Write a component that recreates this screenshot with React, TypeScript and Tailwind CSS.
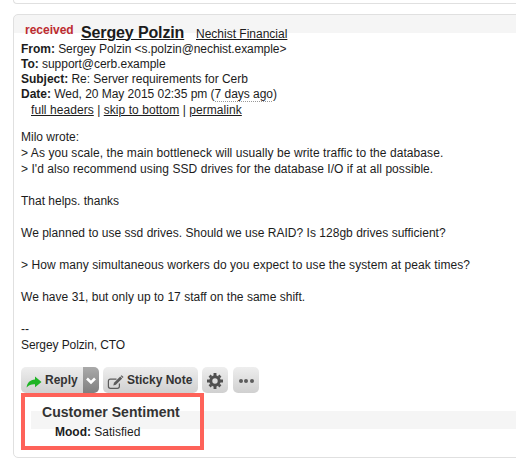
import type { ReactNode } from "react";

const BODY: { text: string; tracking?: string }[] = [
  { text: "Milo wrote:" },
  {
    text: "> As you scale, the main bottleneck will usually be write traffic to the database.",
    tracking: "tracking-[0.073px]",
  },
  {
    text: "> I'd also recommend using SSD drives for the database I/O if at all possible.",
    tracking: "tracking-[0.052px]",
  },
  { text: "" },
  { text: "That helps. thanks" },
  { text: "" },
  {
    text: "We planned to use ssd drives. Should we use RAID? Is 128gb drives sufficient?",
    tracking: "tracking-[0.02px]",
  },
  { text: "" },
  {
    text: "> How many simultaneous workers do you expect to use the system at peak times?",
    tracking: "tracking-[0.075px]",
  },
  { text: "" },
  { text: "We have 31, but only up to 17 staff on the same shift.", tracking: "tracking-[0.02px]" },
  { text: "" },
  { text: "--" },
  { text: "Sergey Polzin, CTO", tracking: "tracking-[-0.1px]" },
];

function Field({ label, children }: { label: string; children: ReactNode }) {
  return (
    <div className="h-[15px] leading-[15px] tracking-[-0.03px]">
      <b>{label}:</b> {children}
    </div>
  );
}

function HeaderLink({ children }: { children: ReactNode }) {
  return <a className="underline decoration-1 underline-offset-1">{children}</a>;
}

const BUTTON =
  "flex h-[26px] items-center bg-linear-to-b from-[#eeeeee] to-[#d0d0d0] font-bold text-[#333]";

function ReplyArrow() {
  return (
    <svg className="mt-[4px] h-[12px] w-[16px]" viewBox="0 0 16 12">
      <path d="M9 0.5 L15.5 6 L9 11.2 V8.2 C5.5 8 3 8.8 0.6 11.6 C1.2 7 4 3.8 9 3.6 Z" fill="#1fb425" />
    </svg>
  );
}

function EditIcon() {
  return (
    <svg className="mt-[4px] h-[14px] w-[17px]" viewBox="0 0 17 14" fill="none" stroke="#5c5c5c">
      <path d="M9.5 4.2 H3.4 Q1.4 4.2 1.4 6.2 V11.3 Q1.4 13.3 3.4 13.3 H10.4 Q12.4 13.3 12.4 11.3 V8.6" strokeWidth="1.2" />
      <path d="M6.3 10.4 L7 7.8 L13.2 1.5 L15.2 3.5 L8.9 9.8 Z" fill="#5c5c5c" stroke="none" />
      <path d="M13.7 1 L14.6 0.2 L16.5 2.1 L15.7 3 Z" fill="#5c5c5c" stroke="none" />
    </svg>
  );
}

function GearIcon() {
  return (
    <svg className="mt-[2px] h-[16px] w-[16px]" viewBox="-8 -8 16 16" fill="none" stroke="#505050">
      <circle r="4.2" strokeWidth="3" />
      <g strokeWidth="2.9">
        <path d="M0 -8 V-5 M0 5 V8 M-8 0 H-5 M5 0 H8" />
        <path d="M-5.4 -5.4 L-3.8 -3.8 M5.4 5.4 L3.8 3.8 M-5.4 5.4 L-3.8 3.8 M5.4 -5.4 L3.8 -3.8" />
      </g>
    </svg>
  );
}

export default function App() {
  return (
    <div className="relative h-[465px] w-[516px] overflow-hidden bg-white pl-[13px] font-['Liberation_Sans',Arial,sans-serif] text-[12px] text-[#1c1c1c]">
      <div className="h-[4px] w-[520px] rounded-bl-[4px] border-b border-l border-[#e0e0e0]" />
      <article className="mt-[10px] h-[444px] w-[520px] rounded-l-[5px] border border-[#e0e0e0] bg-[linear-gradient(#f5f5f5,#f5f5f5)] bg-[length:100%_18px] bg-no-repeat pl-[7px] whitespace-nowrap">
        <header className="h-[114px]">
          <div className="flex h-[27px] items-start">
            <span className="mt-[8px] ml-[4px] w-[56px] leading-[14px] font-bold text-[#bd2c30]">received</span>
            <span className="mt-[9px] w-[115px] text-[16px] leading-[18px] font-bold tracking-[-0.13px]">
              <a className="underline decoration-1 underline-offset-1">Sergey Polzin</a>
            </span>
            <span className="mt-[12px] leading-[14px]">
              <HeaderLink>Nechist Financial</HeaderLink>
            </span>
          </div>
          <Field label="From">
            <span className="tracking-[-0.07px]">Sergey Polzin &lt;s.polzin@nechist.example&gt;</span>
          </Field>
          <Field label="To">support@cerb.example</Field>
          <Field label="Subject">Re: Server requirements for Cerb</Field>
          <Field label="Date">
            Wed, 20 May 2015 02:35 pm (
            <span className="bg-[repeating-linear-gradient(90deg,#999_0_1px,transparent_1px_2px)] bg-[length:100%_1px] bg-bottom bg-no-repeat pb-px">
              7 days ago
            </span>
            )
          </Field>
          <nav className="mt-[1px] ml-[10px] leading-[15px] tracking-[0.06px]">
            <HeaderLink>full headers</HeaderLink> | <HeaderLink>skip to bottom</HeaderLink> |{" "}
            <HeaderLink>permalink</HeaderLink>
          </nav>
        </header>
        <div className="h-[238px]">
          {BODY.map((line, i) => (
            <p key={i} className={`h-[16px] leading-[16px] ${line.tracking ?? ""}`}>
              {line.text}
            </p>
          ))}
        </div>
        <div className="flex h-[26px] text-[12px]">
          <button className={`${BUTTON} w-[62px] rounded-l-[5px] pl-[5px]`}>
            <ReplyArrow />
            <span className="ml-[3px]">Reply</span>
          </button>
          <button className="flex h-[26px] w-[16px] items-center justify-center rounded-r-[5px] bg-linear-to-b from-[#aaa] to-[#808080]">
            <svg className="mt-[2px] h-[8px] w-[10px]" viewBox="0 0 10 8">
              <path d="M1 1.5 L5 5.5 L9 1.5" fill="none" stroke="#fff" strokeWidth="2.6" />
            </svg>
          </button>
          <button className={`${BUTTON} ml-[4px] w-[95px] rounded-[5px] pl-[4px]`}>
            <EditIcon />
            <span className="ml-[3px]">Sticky Note</span>
          </button>
          <button className={`${BUTTON} ml-[4px] w-[26px] justify-center rounded-[5px]`}>
            <GearIcon />
          </button>
          <button className={`${BUTTON} ml-[5px] w-[26px] justify-center gap-[1.5px] rounded-[5px] pt-[2px]`}>
            <i className="size-[4px] rounded-full bg-[#5c5c5c]" />
            <i className="size-[4px] rounded-full bg-[#5c5c5c]" />
            <i className="size-[4px] rounded-full bg-[#5c5c5c]" />
          </button>
        </div>
        <section className="mt-[10px] ml-[10px] h-[46px] bg-[linear-gradient(#f5f5f5,#f5f5f5)] bg-[length:100%_18px] bg-[position:0_8px] bg-no-repeat pl-[11px]">
          <h2 className="h-[21px] text-[14px] leading-[18px] font-bold tracking-[0.05px] text-[#333]">
            Customer Sentiment
          </h2>
          <p className="ml-[13px] leading-[16px]">
            <b>Mood:</b> Satisfied
          </p>
        </section>
      </article>
      <div className="absolute top-[393px] left-[21px] h-[57px] w-[183px] border-4 border-[#fe6259]" />
    </div>
  );
}
